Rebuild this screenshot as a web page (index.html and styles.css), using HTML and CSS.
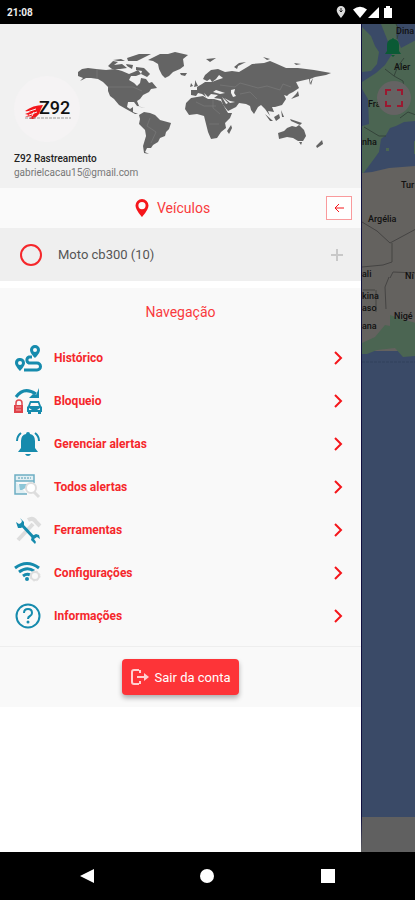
FILE: index.html
```html
<!DOCTYPE html>
<html lang="pt-BR">
<head>
    <meta charset="UTF-8">
    <meta name="viewport" content="width=device-width, initial-scale=1.0">
    <title>Z92 Rastreamento</title>
    <link rel="stylesheet" href="styles.css">
</head>
<body>
    <header class="status-bar">
        <span class="clock">21:08</span>
        <svg class="status-icons" viewBox="0 0 64 14" aria-hidden="true">
            <path d="M6 1a4.300 4.300 0 0 0-4.300 4.300C1.700 8.500 6 13 6 13s4.300-4.500 4.300-7.700A4.300 4.300 0 0 0 6 1z" fill="#ddd"/>
            <path d="M6 3v4M4.500 5.500 6 7l1.500-1.500" fill="none" stroke="#222"/>
            <path d="M18 4.500Q25-1 32 4.500L25 13z" fill="#fff"/>
            <path d="M33 13 44 2v11z" fill="#fff"/>
            <path d="M49 3h2V1h4v2h2v10h-8z" fill="#fff"/>
        </svg>
    </header>

    <main class="screen">
        <aside class="drawer">
            <section class="profile">
                <svg class="world" viewBox="0 24 361 164" aria-hidden="true">
                    <path d="M78 72 82 69 88 68 96 69 106 70 115 69 122 71 129 74 134 72 138 70 141 74 136 76 131 76 129 80 134 83 137 86 140 83 141 78 146 79 149 83 152 82 157 88 151 89 149 92 143 95 140 99 137 101 139 106 137 106 134 102 128 102 127 107 130 109 133 107 133 112 138 114 141 114 135 114 126 109 119 105 114 99 110 96 108 91 108 87 103 82 98 79 91 78 86 78 80 81 83 78 78 76z"/>
                    <path d="M148 60 154 57 160 54 168 54 175 52 188 55 183 59 184 66 180 69 173 72 169 76 165 78 162 75 159 69 158 64 153 61z"/>
                    <path d="M139 115 144 112 150 113 155 115 160 120 171 123 169 129 166 132 165 136 160 138 158 142 153 145 151 148 147 148 145 152 149 154 144 153 143 146 146 136 145 130 139 124 140 119z"/>
                    <path d="M191 98 203 96 208 99 214 99 221 101 225 108 228 113 232 113 230 118 225 123 226 128 221 132 217 138 211 139 208 132 206 124 204 116 197 114 189 115 185 109 186 103z"/>
                    <path d="M191 95 191 90 197 90 197 87 202 84 205 82 212 82 217 80 223 78 219 75 216 79 212 82 210 79 207 81 203 79 205 75 211 70 218 69 225 72 232 71 239 72 244 69 249 66 252 64 264 63 270 61 277 64 286 68 298 68 314 70 331 73 326 75 315 77 310 79 310 85 309 79 296 82 299 88 293 92 289 94 287 96 284 95 286 99 282 105 275 107 272 107 274 112 268 111 270 116 265 109 261 105 258 107 254 114 251 110 250 106 246 104 239 103 236 107 228 111 223 105 221 99 214 98 218 95 211 94 208 97 204 93 206 97 202 94 198 93 196 96z"/>
                    <path d="M278 133 284 131 287 128 292 126 296 127 299 125 304 130 306 136 303 141 298 141 293 138 287 137 279 139z"/>
                    <path d="M231 125 232 128 229 134 227 131zM322 140 323 144 317 148 316 146zM265 114 273 121 270 121zM274 117 279 114 280 118 276 121zM290 119 302 123 300 125 291 121zM296 94 298 91 299 96 291 99 294 96zM195 80 198 86 194 87 195 83zM191 83 193 86 190 87zM180 73 187 73 185 76 181 75zM206 59 216 58 210 62zM234 67 239 63 246 62 238 66 237 69zM263 57 270 59 267 60zM294 63 301 64 296 65zM281 110 284 117 282 117zM299 142 302 142 301 145zM310 83 313 78 311 85z"/>
                    <path d="M108 66 113 61 118 62 114 65 122 64 127 68 120 69 112 69zM113 60 121 59 125 61 118 61zM127 58 139 54 151 54 145 57 137 61 128 61zM126 64 133 65 132 69 127 66zM136 67 144 68 150 74 147 77 141 74 142 71 136 70zM136 106 146 108 140 107z"/>
                    <path class="water" d="M213 92 216 90 225 93 220 94zM231 90 235 89 234 93 236 96 233 97 231 93zM222 97 228 103 226 104zM224 98 230 101 235 102 230 103z"/>
                    <path class="borders" d="M108 87H133L142 91M97 69V79M150 118 147 126 156 132 151 143M220 85 235 87 240 83 251 86 258 88 267 86 280 90 283 84 291 87M240 94 250 92 257 99M196 102 204 106 216 106M213 99V108L220 114M209 124H219"/>
                </svg>
                <div class="avatar">
                    <svg viewBox="0 0 66 66" role="img" aria-label="Z92">
                        <path d="M11 35q8-6 18-6l-2 4-2 5-5 5h-5l3-3-7 1 4-2-4-1 5-2z" fill="#f3161b"/>
                        <path d="M13 36l9-3M15 39l8-3M20 36l-2 4" stroke="#f5f3f4"/>
                        <text class="logo-text" x="25" y="38">Z92</text>
                        <path d="M11 42h46" stroke="#999" stroke-dasharray="3 1"/>
                    </svg>
                </div>
                <strong class="name">Z92 Rastreamento</strong>
                <span class="email">gabrielcacau15@gmail.com</span>
            </section>

            <div class="vehicles-bar">
                <h2 class="vehicles-title">
                    <svg class="pin" viewBox="0 0 14 18" aria-hidden="true">
                        <path fill-rule="evenodd" d="M7 0a6.500 6.500 0 0 0-6.500 6.500C.5 11 7 18 7 18s6.500-7 6.500-11.500A6.500 6.500 0 0 0 7 0zm0 3a3.600 3.600 0 1 1 0 7.200A3.600 3.600 0 0 1 7 3z"/>
                    </svg>
                    Veículos
                </h2>
                <button class="back" type="button" aria-label="Voltar">
                    <svg viewBox="0 0 12 12" aria-hidden="true"><path d="M11 6H2M6 2 2 6l4 4"/></svg>
                </button>
            </div>

            <div class="vehicle">
                <span class="ring"></span>
                <span class="vehicle-name">Moto cb300 (10)</span>
                <button class="add" type="button" aria-label="Expandir">
                    <svg viewBox="0 0 12 12" aria-hidden="true"><path d="M6 0v12M0 6h12"/></svg>
                </button>
            </div>

            <nav class="menu">
                <h2>Navegação</h2>
                <a href="#historico">
                    <svg class="icon" viewBox="0 0 28 28" aria-hidden="true">
                        <path class="fill" fill-rule="evenodd" d="M21 1a5 5 0 0 0-5 5c0 3.500 5 8 5 8s5-4.500 5-8a5 5 0 0 0-5-5zm0 3a2 2 0 1 1 0 4 2 2 0 0 1 0-4zM5 14a5 5 0 0 0-4 5c0 3 5 8 5 8s5-5 5-8a5 5 0 0 0-6-5zm1 3a2 2 0 1 1 0 4 2 2 0 0 1 0-4z"/>
                        <path class="line thick" d="M18 13h-3a3.200 3.200 0 0 0 0 6h8a3.400 3.400 0 0 1 0 7H10"/>
                    </svg>
                    <span>Histórico</span>
                    <svg class="chevron" viewBox="0 0 10 16" aria-hidden="true"><path d="m2 2 6 6-6 6"/></svg>
                </a>
                <a href="#bloqueio">
                    <svg class="icon" viewBox="0 0 28 28" aria-hidden="true">
                        <path class="line thick" d="M2 10q8-11 20-3"/>
                        <path class="fill" d="M25 1v10H15l4-4 3 1z"/>
                        <path d="M2 18v-2a3 3 0 0 1 6 0v2" fill="none" stroke="#e04a50" stroke-width="1.500"/>
                        <path d="M0 18h9v8H0z" fill="#e0434a"/>
                        <path d="M2 20h5M2 23h5" stroke="#f2a5a5"/>
                        <path class="fill" fill-rule="evenodd" d="m14 19 2-5h9l2 5 1 1v5h-1v2h-3v-2h-7v2h-3v-2h-1v-5zm3-3-1 3h9l-1-3zm-2 5v2h3zm11 0v2h-3z"/>
                    </svg>
                    <span>Bloqueio</span>
                    <svg class="chevron" viewBox="0 0 10 16" aria-hidden="true"><path d="m2 2 6 6-6 6"/></svg>
                </a>
                <a href="#gerenciar">
                    <svg class="icon" viewBox="0 0 28 28" aria-hidden="true">
                        <path class="fill" d="M12 4q0-2 2-2t2 2q5 1 5 7v7l3 4H4l3-4v-7q0-6 5-7zM11 24h6q-1 2-3 2t-3-2z"/>
                        <path class="line" d="M7 3Q3 6 3 11M21 3q4 3 4 8"/>
                    </svg>
                    <span>Gerenciar alertas</span>
                    <svg class="chevron" viewBox="0 0 10 16" aria-hidden="true"><path d="m2 2 6 6-6 6"/></svg>
                </a>
                <a href="#todos">
                    <svg class="icon" viewBox="0 0 28 28" aria-hidden="true">
                        <path d="M1 2h19v6H1zM1 8v13h12M20 8v2" fill="#e1eff3" stroke="#6dafc4" stroke-width="1.500"/>
                        <path d="M4 5h13" stroke="#5199b0" stroke-dasharray="2 1"/>
                        <path d="M5 11h8v3l-5 3H6z" fill="#8dc6d7"/>
                        <circle cx="17" cy="15" r="5" fill="#fff" stroke="#ddd" stroke-width="2"/>
                        <path d="m20 19 5 5" stroke="#ddd" stroke-width="3"/>
                    </svg>
                    <span>Todos alertas</span>
                    <svg class="chevron" viewBox="0 0 10 16" aria-hidden="true"><path d="m2 2 6 6-6 6"/></svg>
                </a>
                <a href="#ferramentas">
                    <svg class="icon" viewBox="0 0 28 28" aria-hidden="true">
                        <path d="M4 24 19 8M14 4q5-3 8 2l4 4" fill="none" stroke="#ddd" stroke-width="4"/>
                        <path class="line thick" d="m7 8 13 14"/>
                        <path class="fill" d="m6 2 4 4v4l-3 2H4L2 6l3 2 2-1 1-2zM22 18l-4 2-1 4 4 4 1-2-2-3 3-2 3 2-1-4z"/>
                    </svg>
                    <span>Ferramentas</span>
                    <svg class="chevron" viewBox="0 0 10 16" aria-hidden="true"><path d="m2 2 6 6-6 6"/></svg>
                </a>
                <a href="#configuracoes">
                    <svg class="icon" viewBox="0 0 28 28" aria-hidden="true">
                        <path class="line thick" d="M1 9q12-9 24 0M5 13q8-6 15-1M9 17q4-3 7-1"/>
                        <circle class="fill" cx="13" cy="20" r="2"/>
                        <circle cx="21" cy="17" r="4" fill="none" stroke="#ddd" stroke-width="2"/>
                        <circle cx="21" cy="17" r="5" fill="none" stroke="#ddd" stroke-dasharray="2 2"/>
                    </svg>
                    <span>Configurações</span>
                    <svg class="chevron" viewBox="0 0 10 16" aria-hidden="true"><path d="m2 2 6 6-6 6"/></svg>
                </a>
                <a href="#informacoes">
                    <svg class="icon" viewBox="0 0 28 28" aria-hidden="true">
                        <circle class="line" cx="14" cy="14" r="11.500"/>
                        <path class="line" d="M10 11q0-4 4-4t4 4q0 2-2 3t-2 3"/>
                        <circle class="fill" cx="14" cy="20" r="1.500"/>
                    </svg>
                    <span>Informações</span>
                    <svg class="chevron" viewBox="0 0 10 16" aria-hidden="true"><path d="m2 2 6 6-6 6"/></svg>
                </a>
            </nav>

            <div class="logout-area">
                <button class="logout" type="button">
                    <svg viewBox="0 0 18 18" aria-hidden="true">
                        <path d="M8 2H3Q1 2 1 4v10q0 2 2 2h5M9 2v3M9 13v3M6 9h9"/>
                        <path class="head" d="m13 5 5 4-5 4z"/>
                    </svg>
                    Sair da conta
                </button>
            </div>
        </aside>

        <div class="map">
            <svg viewBox="0 0 54 793" preserveAspectRatio="xMinYMin slice" aria-hidden="true">
                <path d="M0 0h54v793H0z" fill="#3a4a67"/>
                <path d="M0 3 9 12 13 22 17 28 15 40 9 47 0 48z" fill="#4b6552"/>
                <path d="M19 0h16l-1 12 5 12 15-8v81l-12 1-8 4-6 2-4 7-5 4-2 13-8 11-9 12V102l7-2-1-25-6-10V58l14-9 9-8 7-11-3-10z" fill="#4b6552"/>
                <path d="M34 0 37 6 35 15M23 45 32 52 41 57 43 70M32 52 36 42 42 34M2 103 17 112 24 112M38 94 46 88 54 91" fill="none" stroke="#34443a"/>
                <path d="M24 124h3v3h-3zM52 117h2v13h-2z" fill="#4b6552"/>
                <path d="M0 149 10 148 27 144 54 142v185H0z" fill="#64625f"/>
                <path d="M0 319 13 313 23 301 28 302 28 291 39 295 54 299v33l-13 1-8-9-18 2-10 4H0z" fill="#4b6552"/>
                <path d="M0 198 15 207 28 219 54 205M30 219V238L21 241 0 243M28 254 31 248 54 249M27 253 23 263 24 285M14 266v22M1 266h12" fill="none" stroke="#454443"/>
                <path d="M0 338h54" stroke="#30405c" stroke-dasharray="3 1"/>
                <g class="labels">
                    <text x="34" y="10">Dina</text>
                    <text x="32" y="46">Aler</text>
                    <text x="6" y="83">Fra</text>
                    <text x="0" y="121">nha</text>
                    <text x="39" y="164">Tur</text>
                    <text x="6" y="198">Argélia</text>
                    <text x="0" y="253">ali</text>
                    <text x="43" y="255">Ní</text>
                    <text x="0" y="275">kina</text>
                    <text x="0" y="287">aso</text>
                    <text x="32" y="295">Nigé</text>
                    <text x="0" y="305">ana</text>
                </g>
                <path d="M30 15q1-2 2 0 5 1 5 6v6l2 3H23l2-3v-6q0-5 5-6zM29 31h4l-2 2z" fill="#0a5a35"/>
            </svg>
            <button class="focus" type="button" aria-label="Centralizar">
                <svg viewBox="0 0 18 18" aria-hidden="true"><path d="M1 6V1h5M12 1h5v5M17 12v5h-5M6 17H1v-5"/></svg>
            </button>
        </div>
    </main>

    <footer class="android-nav">
        <button type="button" aria-label="Voltar"><svg viewBox="0 0 14 14"><path d="M14 0v14L0 7z"/></svg></button>
        <button type="button" aria-label="Início"><svg viewBox="0 0 14 14"><circle cx="7" cy="7" r="7"/></svg></button>
        <button type="button" aria-label="Recentes"><svg viewBox="0 0 14 14"><path d="M0 0h14v14H0z"/></svg></button>
    </footer>
</body>
</html>
```

FILE: styles.css
```css
* {
    box-sizing: border-box;
}

body {
    margin: 0;
    min-height: 100vh;
    display: flex;
    flex-direction: column;
    background: #000;
    font-family: Roboto, sans-serif;
    color: #555;
}

button {
    border: none;
    background: none;
    padding: 0;
    font-family: inherit;
    cursor: pointer;
}

h2 {
    margin: 0;
    font-size: 14px;
    font-weight: 400;
    color: #f93a3d;
}

svg {
    display: block;
}

.status-bar {
    height: 24px;
    padding: 0 16px 0 7px;
    display: flex;
    align-items: center;
    justify-content: space-between;
}

.clock {
    font-size: 10px;
    font-weight: 700;
    color: #eee;
}

.status-icons {
    width: 64px;
    height: 14px;
}

.screen {
    flex: 1;
    display: flex;
}

/* side drawer */
.drawer {
    width: 87%;
    background: #fff;
}

.profile {
    position: relative;
    display: flex;
    flex-direction: column;
    padding: 52px 14px 8px;
    background: #f1f1f1;
    line-height: 14px;
    font-size: 10px;
}

.world {
    position: absolute;
    top: 0;
    left: 0;
    width: 100%;
    fill: #646464;
}

.world .water {
    fill: #f1f1f1;
}

.world .borders {
    fill: none;
    stroke: #828282;
    stroke-width: 0.5;
}

.avatar {
    width: 66px;
    height: 66px;
    margin-bottom: 10px;
    border-radius: 50%;
    background: #f5f3f4;
}

.logo-text {
    font-size: 18px;
    font-weight: 500;
    fill: #111;
}

.name {
    font-weight: 500;
    color: #222;
}

.email {
    color: #777;
}

.vehicles-bar {
    height: 40px;
    padding: 0 9px 0 19px;
    display: grid;
    grid-template-columns: 1fr 26px;
    align-items: center;
    background: #fafafa;
}

.vehicles-title {
    display: flex;
    justify-content: center;
    align-items: center;
    gap: 8px;
}

.pin {
    width: 14px;
    height: 18px;
    fill: #f5161b;
}

.back {
    height: 24px;
    display: grid;
    place-items: center;
    border: 1px solid #f99a9c;
    background: #fff;
}

.back svg {
    width: 12px;
    fill: none;
    stroke: #f5161b;
}

.vehicle {
    height: 53px;
    margin-bottom: 7px;
    padding: 0 18px 0 20px;
    display: flex;
    align-items: center;
    background: #efefef;
}

.ring {
    width: 22px;
    height: 22px;
    border: 2px solid #f5272b;
    border-radius: 50%;
}

.vehicle-name {
    flex: 1;
    padding-left: 16px;
    font-size: 13px;
}

.add svg {
    width: 12px;
    stroke: #c8c8c8;
    stroke-width: 2;
}

.menu {
    padding-bottom: 9px;
    background: #f9f9f9;
    border-bottom: 1px solid #eee;
}

.menu h2 {
    line-height: 48px;
    text-align: center;
}

.menu a {
    height: 43px;
    padding: 0 18px 0 14px;
    display: flex;
    align-items: center;
    gap: 12px;
    font-size: 12px;
    font-weight: 700;
    color: #f5272b;
    text-decoration: none;
}

.menu a span {
    flex: 1;
}

.icon {
    width: 28px;
    height: 28px;
}

.fill {
    fill: #168bad;
}

.line {
    fill: none;
    stroke: #168bad;
    stroke-width: 2;
}

.thick {
    stroke-width: 3;
}

.chevron {
    width: 10px;
    height: 16px;
    fill: none;
    stroke: #f5161b;
    stroke-width: 2;
}

.logout-area {
    padding: 12px 0;
    background: #f9f9f9;
}

.logout {
    height: 36px;
    margin: 0 auto;
    padding: 0 9px;
    display: flex;
    align-items: center;
    gap: 6px;
    border-radius: 4px;
    background: #fd3438;
    box-shadow: 0 3px 5px rgba(0, 0, 0, 0.3);
    font-size: 13px;
    color: #fff;
}

.logout svg {
    width: 18px;
    fill: none;
    stroke: #ffd0d0;
    stroke-width: 2;
}

.logout .head {
    fill: #ffd0d0;
    stroke: none;
}

/* dimmed map behind the drawer */
.map {
    flex: 1;
    position: relative;
    overflow: hidden;
    border-left: 1px solid #101040;
    border-bottom: 35px solid #606060;
    background: #3a4a67;
}

.map > svg {
    position: absolute;
    width: 100%;
    height: 100%;
}

.labels {
    font-size: 9px;
    font-weight: 500;
    fill: #111;
}

.focus {
    position: absolute;
    top: 57px;
    left: 15px;
    width: 34px;
    height: 34px;
    display: grid;
    place-items: center;
    border-radius: 50%;
    background: #656363;
}

.focus svg {
    width: 18px;
    fill: none;
    stroke: #9b1830;
    stroke-width: 2;
}

.android-nav {
    height: 48px;
    padding: 0 27px;
    display: flex;
    justify-content: space-around;
    align-items: center;
}

.android-nav svg {
    width: 14px;
    fill: #fff;
}
```
